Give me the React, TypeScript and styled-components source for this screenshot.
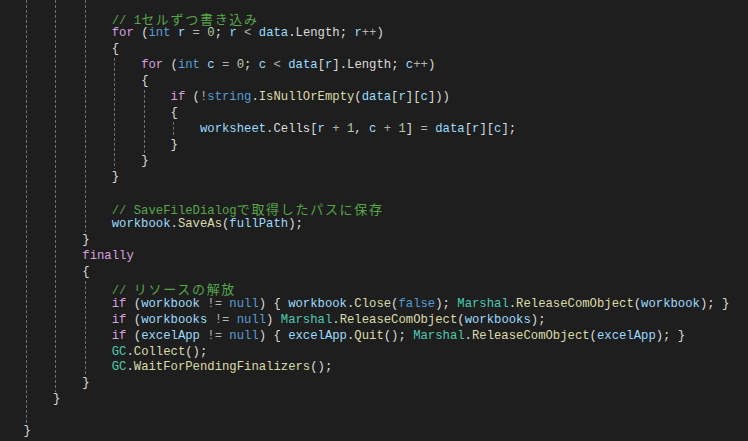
import React from "react";
import styled, { createGlobalStyle } from "styled-components";

const CH = 7.351;
const LH = 15.92;
const TOP = 10.5;
const LEFT = 23.5;

const Global = createGlobalStyle`
  html, body { margin: 0; padding: 0; background: #1e1e1e; overflow: hidden; }
  #root { width: 748px; height: 441px; }
`;

const Editor = styled.div`
  position: relative;
  width: 748px;
  height: 441px;
  background: #1e1e1e;
  overflow: hidden;
  padding: ${TOP}px 0 0 ${LEFT}px;
  box-sizing: border-box;
  font-family: "Liberation Mono", "Noto Sans CJK JP", monospace;
  font-size: 12.25px;
  color: #dcdcdc;
`;

const Line = styled.div`
  height: ${LH}px;
  line-height: ${LH}px;
  white-space: pre;
`;

const colors: Record<string, string> = {
  kw: "#569cd6",
  ctl: "#d8a0df",
  var: "#9cdcfe",
  fn: "#dcdcaa",
  type: "#4ec9b0",
  num: "#b5cea8",
  cm: "#57a64a",
  op: "#b4b4b4",
  p: "#dcdcdc",
};

const Tok = styled.span<{ $k: string }>`
  color: ${(p) => colors[p.$k] || "#dcdcdc"};
`;

const Jp = styled.span`
  font-family: "Noto Sans CJK JP", sans-serif;
  font-size: 13px;
  letter-spacing: 1.702px;
`;

const Guide = styled.div`
  position: absolute;
  width: 1px;
  background: repeating-linear-gradient(
    to bottom,
    #6e6e6e 0px,
    #6e6e6e 3px,
    transparent 3px,
    transparent 5px
  );
`;

type T = [string, string];

const jpRe = /([\u3000-\u30ff\u4e00-\u9fff]+)/;

const renderTok = (text: string, k: string, key: number) => {
  if (k === "cm") {
    const parts = text.split(jpRe);
    return (
      <Tok $k={k} key={key}>
        {parts.map((s, i) => (jpRe.test(s) ? <Jp key={i}>{s}</Jp> : s))}
      </Tok>
    );
  }
  return (
    <Tok $k={k} key={key}>
      {text}
    </Tok>
  );
};

const sp = (n: number): T => [" ".repeat(n), "p"];

const lines: T[][] = [
  [sp(12), ["// 1セルずつ書き込み", "cm"]],
  [sp(12), ["for", "ctl"], [" (", "p"], ["int", "kw"], [" ", "p"], ["r", "var"], [" = ", "op"], ["0", "num"], ["; ", "p"], ["r", "var"], [" < ", "op"], ["data", "var"], [".Length; ", "p"], ["r", "var"], ["++", "op"], [")", "p"]],
  [sp(12), ["{", "p"]],
  [sp(16), ["for", "ctl"], [" (", "p"], ["int", "kw"], [" ", "p"], ["c", "var"], [" = ", "op"], ["0", "num"], ["; ", "p"], ["c", "var"], [" < ", "op"], ["data", "var"], ["[", "p"], ["r", "var"], ["].Length; ", "p"], ["c", "var"], ["++", "op"], [")", "p"]],
  [sp(16), ["{", "p"]],
  [sp(20), ["if", "ctl"], [" (", "p"], ["!", "op"], ["string", "kw"], [".", "p"], ["IsNullOrEmpty", "fn"], ["(", "p"], ["data", "var"], ["[", "p"], ["r", "var"], ["][", "p"], ["c", "var"], ["]))", "p"]],
  [sp(20), ["{", "p"]],
  [sp(24), ["worksheet", "var"], [".Cells[", "p"], ["r", "var"], [" + ", "op"], ["1", "num"], [", ", "p"], ["c", "var"], [" + ", "op"], ["1", "num"], ["] ", "p"], ["=", "op"], [" ", "p"], ["data", "var"], ["[", "p"], ["r", "var"], ["][", "p"], ["c", "var"], ["];", "p"]],
  [sp(20), ["}", "p"]],
  [sp(16), ["}", "p"]],
  [sp(12), ["}", "p"]],
  [],
  [sp(12), ["// SaveFileDialogで取得したパスに保存", "cm"]],
  [sp(12), ["workbook", "var"], [".", "p"], ["SaveAs", "fn"], ["(", "p"], ["fullPath", "var"], [");", "p"]],
  [sp(8), ["}", "p"]],
  [sp(8), ["finally", "ctl"]],
  [sp(8), ["{", "p"]],
  [sp(12), ["// リソースの解放", "cm"]],
  [sp(12), ["if", "ctl"], [" (", "p"], ["workbook", "var"], [" != ", "op"], ["null", "kw"], [") { ", "p"], ["workbook", "var"], [".", "p"], ["Close", "fn"], ["(", "p"], ["false", "kw"], ["); ", "p"], ["Marshal", "type"], [".", "p"], ["ReleaseComObject", "fn"], ["(", "p"], ["workbook", "var"], ["); }", "p"]],
  [sp(12), ["if", "ctl"], [" (", "p"], ["workbooks", "var"], [" != ", "op"], ["null", "kw"], [") ", "p"], ["Marshal", "type"], [".", "p"], ["ReleaseComObject", "fn"], ["(", "p"], ["workbooks", "var"], [");", "p"]],
  [sp(12), ["if", "ctl"], [" (", "p"], ["excelApp", "var"], [" != ", "op"], ["null", "kw"], [") { ", "p"], ["excelApp", "var"], [".", "p"], ["Quit", "fn"], ["(); ", "p"], ["Marshal", "type"], [".", "p"], ["ReleaseComObject", "fn"], ["(", "p"], ["excelApp", "var"], ["); }", "p"]],
  [sp(12), ["GC", "type"], [".", "p"], ["Collect", "fn"], ["();", "p"]],
  [sp(12), ["GC", "type"], [".", "p"], ["WaitForPendingFinalizers", "fn"], ["();", "p"]],
  [sp(8), ["}", "p"]],
  [sp(4), ["}", "p"]],
  [],
  [sp(0), ["}", "p"]],
];

// [column, topPx, bottomPx]
const guides: [number, number, number][] = [
  [0, 0, TOP + 26 * LH - 1],
  [4, 0, TOP + 24 * LH - 1],
  [8, 0, TOP + 14 * LH - 1],
  [8, TOP + 17 * LH, TOP + 23 * LH - 1],
  [12, TOP + 3 * LH, TOP + 10 * LH - 1],
  [16, TOP + 5 * LH, TOP + 9 * LH - 1],
  [20, TOP + 7 * LH, TOP + 8 * LH - 1],
];

export default function App() {
  return (
    <>
      <Global />
      <Editor>
        {guides.map(([col, t, b], i) => (
          <Guide
            key={i}
            style={{
              left: Math.round(LEFT + col * CH + 2.5),
              top: t,
              height: b - t,
            }}
          />
        ))}
        {lines.map((toks, i) => (
          <Line key={i}>{toks.length ? toks.map(([s, k], j) => renderTok(s, k, j)) : " "}</Line>
        ))}
      </Editor>
    </>
  );
}
